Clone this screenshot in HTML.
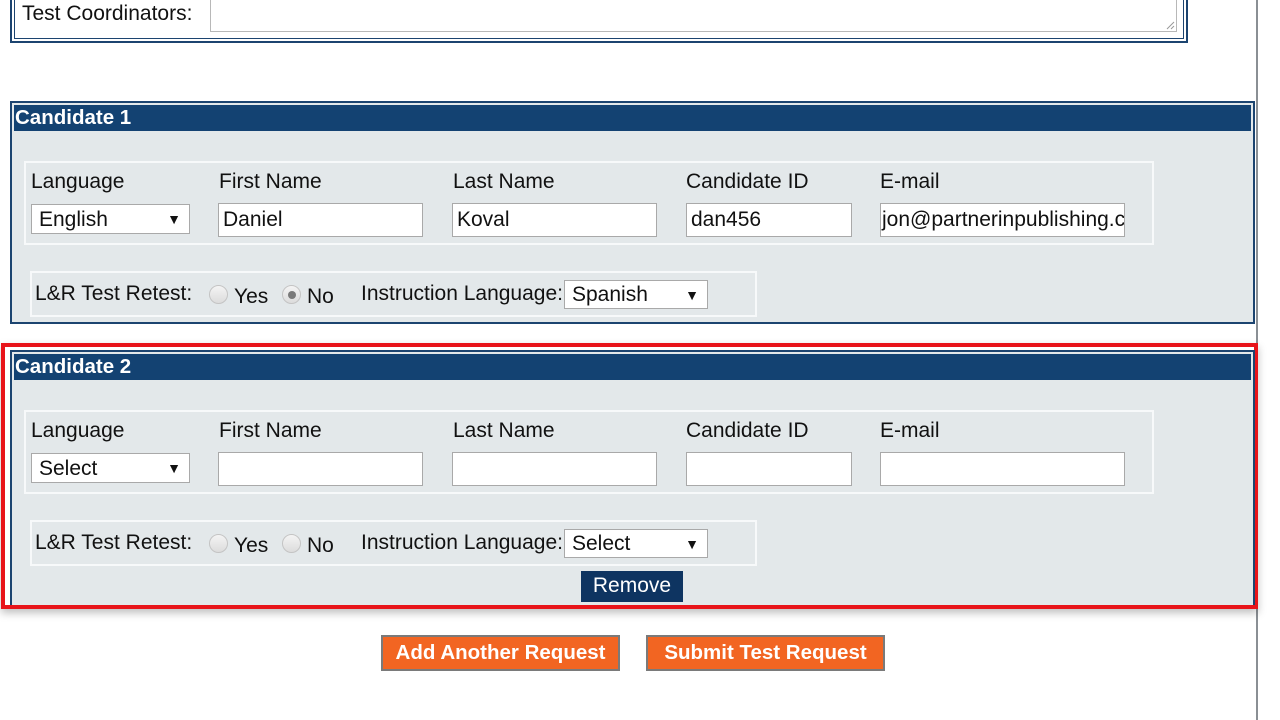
<!DOCTYPE html>
<html><head><meta charset="utf-8"><style>
*{box-sizing:border-box;margin:0;padding:0}
body{width:1280px;height:720px;background:#fff;position:relative;overflow:hidden;font-family:"Liberation Sans",Arial,sans-serif;color:#111}
.a{position:absolute}
.vline{left:1256px;top:0;width:2px;height:720px;background:#8a8f94}
.top{left:10px;top:-10px;width:1178px;height:53px;border:2px solid #1c4470;}
.top .in{position:absolute;left:2px;top:0;right:2px;bottom:2px;border:1px solid #1c4470}
.ta{left:210px;top:-5px;width:967px;height:37px;border:1px solid #b8b8b8;background:#fff}
.lbl{font-size:21px;white-space:nowrap}
.panel{left:10px;width:1245px;border:2px solid #1c4470;background:#e3e8ea}
.panel .hd{position:absolute;left:2px;top:2px;right:2px;height:26px;background:#134272;color:#fff;font-weight:bold;font-size:20.5px;line-height:26px;padding-left:1px}
.box{border:2px solid #f7f9fa}
.inp{background:#fff;border:1px solid #a9a9a9;height:34px;font-size:21px;line-height:32px;padding-left:4px;white-space:nowrap;overflow:hidden}
.sel{background:#fff;border:1px solid #a9a9a9;font-size:21px;padding-left:7px;white-space:nowrap}
.sel:after{content:"▼";position:absolute;right:8px;font-size:14px}
.rad{width:19px;height:19px;border-radius:50%;border:1px solid #c4c4c4;background:linear-gradient(#f4f4f4,#dcdcdc)}
.dot{position:absolute;left:5px;top:5px;width:8px;height:8px;border-radius:50%;background:#7a7a7a}
.btn{background:#f26522;border:2px solid #7a7a7a;color:#fff;font-weight:bold;font-size:20.5px;text-align:center;line-height:31px}
</style></head><body>
<div class="a vline"></div>
<div class="a top"><div class="in"></div></div>
<div class="a ta"><svg style="position:absolute;right:1px;bottom:1px" width="10" height="10"><path d="M9 2L2 9M9 6L6 9" stroke="#999" stroke-width="1"/></svg></div>
<div class="a lbl" style="left:22px;top:2px">Test Coordinators:</div>

<!-- Candidate 1 -->
<div class="a panel" style="top:101px;height:223px"><div class="hd">Candidate 1</div></div>
<div class="a box" style="left:24px;top:161px;width:1130px;height:84px"></div>
<div class="a lbl" style="left:31px;top:170px">Language</div>
<div class="a lbl" style="left:219px;top:170px">First Name</div>
<div class="a lbl" style="left:453px;top:170px">Last Name</div>
<div class="a lbl" style="left:686px;top:170px">Candidate ID</div>
<div class="a lbl" style="left:880px;top:170px">E-mail</div>
<div class="a sel" style="left:31px;top:204px;width:159px;height:30px;line-height:29px">English</div>
<div class="a inp" style="left:218px;top:203px;width:205px">Daniel</div>
<div class="a inp" style="left:452px;top:203px;width:205px">Koval</div>
<div class="a inp" style="left:686px;top:203px;width:166px">dan456</div>
<div class="a inp" style="left:880px;top:203px;width:245px;padding-left:1px">jon@partnerinpublishing.co</div>
<div class="a box" style="left:30px;top:271px;width:727px;height:46px"></div>
<div class="a lbl" style="left:35px;top:282px">L&amp;R Test Retest:</div>
<div class="a rad" style="left:209px;top:285px"></div>
<div class="a lbl" style="left:234px;top:285px">Yes</div>
<div class="a rad" style="left:282px;top:285px"><div class="dot"></div></div>
<div class="a lbl" style="left:307px;top:285px">No</div>
<div class="a lbl" style="left:361px;top:282px">Instruction Language:</div>
<div class="a sel" style="left:564px;top:280px;width:144px;height:29px;line-height:28px">Spanish</div>

<!-- Candidate 2 -->
<div class="a" style="left:1px;top:343px;width:1257px;height:266px;border:4px solid #e8141a;box-shadow:0 4px 8px rgba(0,0,0,.25)"></div>
<div class="a panel" style="top:350px;height:255px;border-bottom:0"><div class="hd">Candidate 2</div></div>
<div class="a box" style="left:24px;top:410px;width:1130px;height:84px"></div>
<div class="a lbl" style="left:31px;top:419px">Language</div>
<div class="a lbl" style="left:219px;top:419px">First Name</div>
<div class="a lbl" style="left:453px;top:419px">Last Name</div>
<div class="a lbl" style="left:686px;top:419px">Candidate ID</div>
<div class="a lbl" style="left:880px;top:419px">E-mail</div>
<div class="a sel" style="left:31px;top:453px;width:159px;height:30px;line-height:29px">Select</div>
<div class="a inp" style="left:218px;top:452px;width:205px"></div>
<div class="a inp" style="left:452px;top:452px;width:205px"></div>
<div class="a inp" style="left:686px;top:452px;width:166px"></div>
<div class="a inp" style="left:880px;top:452px;width:245px"></div>
<div class="a box" style="left:30px;top:520px;width:727px;height:46px"></div>
<div class="a lbl" style="left:35px;top:531px">L&amp;R Test Retest:</div>
<div class="a rad" style="left:209px;top:534px"></div>
<div class="a lbl" style="left:234px;top:534px">Yes</div>
<div class="a rad" style="left:282px;top:534px"></div>
<div class="a lbl" style="left:307px;top:534px">No</div>
<div class="a lbl" style="left:361px;top:531px">Instruction Language:</div>
<div class="a sel" style="left:564px;top:529px;width:144px;height:29px;line-height:28px">Select</div>
<div class="a" style="left:581px;top:571px;width:102px;height:31px;background:#0e3461;color:#fff;font-size:21px;text-align:center;line-height:29px">Remove</div>

<div class="a btn" style="left:381px;top:635px;width:239px;height:36px">Add Another Request</div>
<div class="a btn" style="left:646px;top:635px;width:239px;height:36px">Submit Test Request</div>
</body></html>
